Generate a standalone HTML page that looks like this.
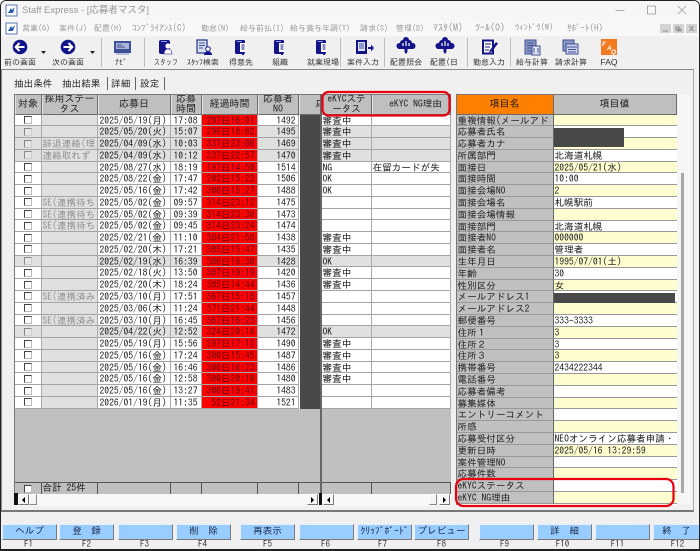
<!DOCTYPE html>
<html lang="ja"><head><meta charset="utf-8"><title>Staff Express</title>
<style>
*{box-sizing:border-box}
html,body{margin:0;padding:0;background:#fff}
body{width:700px;height:551px;overflow:hidden;font:9.6px/11px IPAGothic,"Liberation Mono","Noto Sans CJK JP",monospace;color:#151515}
#w{position:absolute;left:0;top:0;width:700px;height:551px;background:#f0f0f0;border:1px solid #222;border-bottom:2px solid #222;border-radius:6px 6px 0 0;overflow:hidden;filter:blur(.25px)}
#o{position:absolute;left:-1px;top:-1px;width:700px;height:551px}
.a{position:absolute}
i{font-style:normal}
#tb{left:0;top:0;width:700px;height:21px;background:#f6f6f6;color:#999;font:9.5px/22px "Liberation Sans","Noto Sans CJK JP",sans-serif;padding-left:22px}
#mn{left:0;top:21px;width:700px;height:15px;background:#f8f8f8}
#mn span{position:absolute;top:2px;font-size:8px;color:#9a9a9a;white-space:nowrap}
#tl{left:0;top:36px;width:700px;height:33px;background:#f0f0f0}
.lb{position:absolute;top:57px;width:60px;text-align:center;font-size:8px;line-height:10px;color:#333;white-space:nowrap}
.sp{position:absolute;top:38px;width:1px;height:29px;background:#bdbdbd}
#pn{left:1px;top:69px;width:693px;height:443px;border:1px solid #8a8a8a;border-right-color:#aaa;border-bottom:2px solid #777;background:#f0f0f0}
.tab{position:absolute;top:79px;font-size:9.6px;color:#222}
.tl{position:absolute;top:77px;width:1px;height:13px;background:#666}
#g{left:13.5px;top:94px;width:437px;height:411px;background:#c0c0c0;border-top:1px solid #777;border-left:1px solid #777}
.r,.h,.s{display:grid;grid-template-columns:27px 56px 73px 31px 56px 41px 23px 50px 79px}
.h{height:19.5px;background:#bfbfbf}
.h>i{border-right:1px solid #6a6a6a;border-bottom:1px solid #6a6a6a;border-left:1px solid #e4e4e4;text-align:center;font-size:10px;line-height:9.5px;overflow:hidden;white-space:nowrap;display:flex;align-items:center;justify-content:center;color:#222;padding-top:1px}
.r{height:11.78px;background:#fff;line-height:10.5px}
.r>i{border-right:1px solid #aaa;border-bottom:1px solid #a4a4a4;overflow:hidden;white-space:nowrap;display:block;padding-top:2px}
.r>i:first-child{padding-top:0}
.r>i:nth-child(2){background:#e0e0e0;color:#8f8f8f;padding-left:1px}
.r>i:nth-child(3){padding-left:2px}
.r>i:nth-child(4){text-align:center}
.r>i:nth-child(5){background:#f00;color:#5c0000;text-align:right;padding-right:2px}
.r>i:nth-child(6){text-align:right;padding-right:2px}
.r>i:nth-child(7){background:#484848;border-left:1.5px solid #fff;border-right:0;border-bottom:0}
.r>i:nth-child(8){padding-left:1px}
.r>i:nth-child(9){padding-left:1px}
.g{background:#e0e0e0}
u{display:block;width:8px;height:8px;margin:1.5px 0 0 9px;background:#fff;border:1px solid;border-color:#444 #bbb #bbb #444}
.g u{background:#e6e6e6;border-color:#888 #ccc #ccc #888}
.s{position:absolute;left:0;top:387px;height:11.5px;border-top:1px solid #555;line-height:10px;width:436px}
.s>i{border-right:1px solid #555;background:#c0c0c0;padding:1px 0 0 1px;overflow:hidden;white-space:nowrap}
#dv{left:320px;top:94px;width:2px;height:411px;background:#666}
#rg{left:455.5px;top:94px;width:221px;height:411px;background:#fff;border-top:1px solid #777;border-left:1px solid #777}
.hr{display:grid;grid-template-columns:97px 123px;height:19.5px;font-size:10px}
.hr i{display:flex;align-items:center;justify-content:center;background:#bfbfbf;border-right:1px solid #6a6a6a;border-bottom:1px solid #6a6a6a;padding-top:1px}
.hr i:first-child{background:#ff8000}
.p{display:grid;grid-template-columns:97px 123px;height:11.8px;line-height:10.7px;background:#fff}
.p>i{border-bottom:1px solid #999;overflow:hidden;white-space:nowrap;padding:2px 0 0 1px}
.p>i:first-child{background:#c0c0c0;border-right:1px solid #666;color:#222}
.p:nth-child(even)>i:last-child{background:#fdfdd0}
.btn{position:absolute;top:523.5px;height:16px;width:55px;background:#99ccff;border:1px solid;border-color:#e4f0ff #7a7a7a #7a7a7a #e4f0ff;text-align:center;line-height:14px;font-size:9.6px;color:#1c2c50;white-space:pre}
.f{position:absolute;top:539.5px;width:55px;text-align:center;font-size:9px;line-height:10px;color:#333}
.sb{background:#f8f8f8}
.ab{position:absolute;width:11px;height:11px;background:#f4f4f4;border:1px solid;border-color:#fff #777 #777 #fff;color:#000}
.ab:before{content:"";position:absolute;left:3px;top:2.5px;border:3px solid transparent}
.l:before{border-right:3px solid #000;border-left:0}
.rt:before{border-left:3px solid #000;border-right:0}
</style></head><body>
<div id="w"><div id="o">

<div class="a" id="tb">Staff Express - [応募者マスタ]</div>
<div class="a" id="mn">
<span style="left:22px">営業(G)</span><span style="left:59px">案件(J)</span><span style="left:94px">配置(H)</span><span style="left:132px;font-size:9px">ｺﾝﾌﾟﾗｲｱﾝｽ(C)</span><span style="left:201px">勤怠(N)</span><span style="left:240px">給与前払(I)</span><span style="left:290px">給与賞与年調(T)</span><span style="left:360px">請求(S)</span><span style="left:396px">管理(D)</span><span style="left:433px;font-size:10px">ﾏｽﾀ(M)</span><span style="left:475px;font-size:10px">ﾂｰﾙ(O)</span><span style="left:515px;font-size:8.5px">ｳｨﾝﾄﾞｳ(W)</span><span style="left:567px;font-size:9px">ｻﾎﾟｰﾄ(H)</span>
</div>
<div class="a" id="tl"></div>
<div class="sp" style="left:100.5px"></div><div class="sp" style="left:144px"></div><div class="sp" style="left:340px"></div><div class="sp" style="left:384px"></div><div class="sp" style="left:467px"></div><div class="sp" style="left:510px"></div>

<div class="lb" style="left:-10px">前の画面</div>
<div class="lb" style="left:38px">次の画面</div>
<div class="lb" style="left:91px">ﾅﾋﾞ</div>
<div class="lb" style="left:136px"><span style="display:inline-block;transform:scaleX(.75)">スタッフ</span></div>
<div class="lb" style="left:173px">ｽﾀｯﾌ検索</div>
<div class="lb" style="left:211px">得意先</div>
<div class="lb" style="left:250px">組織</div>
<div class="lb" style="left:293px">就業現場</div>
<div class="lb" style="left:333px">案件入力</div>
<div class="lb" style="left:376px">配置照会</div>
<div class="lb" style="left:414px">配置(日</div>
<div class="lb" style="left:459px">勤怠入力</div>
<div class="lb" style="left:502px">給与計算</div>
<div class="lb" style="left:541px">請求計算</div>
<div class="lb" style="left:579px;font-family:'Liberation Sans',sans-serif;font-size:8.5px">FAQ</div>

<div class="a" id="pn"></div>
<div class="tab" style="left:14px">抽出条件</div><div class="tab" style="left:62px">抽出結果</div><div class="tab" style="left:111px">詳細</div><div class="tab" style="left:140px">設定</div>
<div class="tl" style="left:107px"></div><div class="tl" style="left:135px"></div><div class="tl" style="left:164px"></div>

<div class="a" id="g">
<div class="h"><i>対象</i><i>採用ステー<br>タス</i><i>応募日</i><i>応募<br>時間</i><i>経過時間</i><i>応募者<br>NO</i><i style="justify-content:flex-start;padding-left:16px">応</i><i style="font-size:9.6px">eKYCステ<br>ータス</i><i style="padding-left:9px;font-size:9.6px">eKYC NG理由</i></div>
<div class="r"><i><u></u></i><i></i><i>2025/05/19(月)</i><i>17:08</i><i>297日16:01</i><i>1492</i><i></i><i>審査中</i><i></i></div>
<div class="r g"><i><u></u></i><i></i><i>2025/05/20(火)</i><i>15:07</i><i>296日18:02</i><i>1495</i><i></i><i>審査中</i><i></i></div>
<div class="r g"><i><u></u></i><i>辞退連絡(理</i><i>2025/04/09(水)</i><i>10:03</i><i>337日23:06</i><i>1469</i><i></i><i>審査中</i><i></i></div>
<div class="r g"><i><u></u></i><i>連絡取れず</i><i>2025/04/09(水)</i><i>10:12</i><i>337日22:57</i><i>1470</i><i></i><i>審査中</i><i></i></div>
<div class="r"><i><u></u></i><i></i><i>2025/08/27(水)</i><i>18:19</i><i>197日14:50</i><i>1514</i><i></i><i>NG</i><i>在留カードが失</i></div>
<div class="r"><i><u></u></i><i></i><i>2025/08/22(金)</i><i>17:47</i><i>202日15:22</i><i>1506</i><i></i><i>OK</i><i></i></div>
<div class="r"><i><u></u></i><i></i><i>2025/05/16(金)</i><i>17:42</i><i>300日15:27</i><i>1488</i><i></i><i>OK</i><i></i></div>
<div class="r"><i><u></u></i><i>SE(連携待ち</i><i>2025/05/02(金)</i><i>09:57</i><i>314日23:12</i><i>1475</i><i></i><i></i><i></i></div>
<div class="r"><i><u></u></i><i>SE(連携待ち</i><i>2025/05/02(金)</i><i>09:39</i><i>314日23:30</i><i>1473</i><i></i><i></i><i></i></div>
<div class="r"><i><u></u></i><i>SE(連携待ち</i><i>2025/05/02(金)</i><i>09:45</i><i>314日23:24</i><i>1474</i><i></i><i></i><i></i></div>
<div class="r"><i><u></u></i><i></i><i>2025/02/21(金)</i><i>11:10</i><i>384日21:58</i><i>1438</i><i></i><i>審査中</i><i></i></div>
<div class="r"><i><u></u></i><i></i><i>2025/02/20(木)</i><i>17:21</i><i>385日15:47</i><i>1435</i><i></i><i>審査中</i><i></i></div>
<div class="r g"><i><u></u></i><i></i><i>2025/02/19(水)</i><i>16:39</i><i>386日16:30</i><i>1428</i><i></i><i>OK</i><i></i></div>
<div class="r"><i><u></u></i><i></i><i>2025/02/18(火)</i><i>13:50</i><i>387日19:19</i><i>1420</i><i></i><i>審査中</i><i></i></div>
<div class="r"><i><u></u></i><i></i><i>2025/02/20(木)</i><i>18:24</i><i>385日14:44</i><i>1436</i><i></i><i>審査中</i><i></i></div>
<div class="r"><i><u></u></i><i>SE(連携済み</i><i>2025/03/10(月)</i><i>17:51</i><i>367日15:18</i><i>1457</i><i></i><i></i><i></i></div>
<div class="r"><i><u></u></i><i></i><i>2025/03/06(木)</i><i>11:24</i><i>371日21:44</i><i>1448</i><i></i><i></i><i></i></div>
<div class="r"><i><u></u></i><i>SE(連携済み</i><i>2025/03/10(月)</i><i>16:45</i><i>367日16:23</i><i>1456</i><i></i><i></i><i></i></div>
<div class="r g"><i><u></u></i><i></i><i>2025/04/22(火)</i><i>12:52</i><i>324日20:16</i><i>1472</i><i></i><i>OK</i><i></i></div>
<div class="r"><i><u></u></i><i></i><i>2025/05/19(月)</i><i>15:56</i><i>297日17:12</i><i>1490</i><i></i><i>審査中</i><i></i></div>
<div class="r"><i><u></u></i><i></i><i>2025/05/16(金)</i><i>17:24</i><i>300日15:45</i><i>1487</i><i></i><i>審査中</i><i></i></div>
<div class="r"><i><u></u></i><i></i><i>2025/05/16(金)</i><i>16:46</i><i>300日16:23</i><i>1486</i><i></i><i>審査中</i><i></i></div>
<div class="r"><i><u></u></i><i></i><i>2025/05/16(金)</i><i>12:58</i><i>300日20:10</i><i>1480</i><i></i><i>審査中</i><i></i></div>
<div class="r"><i><u></u></i><i></i><i>2025/05/16(金)</i><i>13:27</i><i>300日19:41</i><i>1483</i><i></i><i></i><i></i></div>
<div class="r"><i><u></u></i><i></i><i>2026/01/19(月)</i><i>11:35</i><i>52日21:34</i><i>1521</i><i></i><i></i><i></i></div>
<div class="s"><i style="padding:0"><u></u></i><i>合計 25件</i><i></i><i></i><i></i><i></i><i></i><i></i><i></i></div>
<div class="a sb" style="left:0;top:398.5px;width:436px;height:12px"></div>
</div>
<div class="a" id="dv"></div>
<div class="a" style="left:14px;top:493px;width:4px;height:12px;background:#111"></div>
<div class="ab l" style="left:18px;top:493.5px"></div>
<div class="a" style="left:29px;top:493.5px;width:8px;height:11px;background:#f4f4f4;border:1px solid;border-color:#fff #888 #888 #fff"></div>
<div class="ab rt" style="left:307px;top:493.5px"></div>
<div class="a" style="left:319px;top:493px;width:3px;height:12px;background:#111"></div>
<div class="ab l" style="left:323px;top:493.5px"></div>
<div class="a" style="left:429px;top:493.5px;width:8px;height:11px;background:#f4f4f4;border:1px solid;border-color:#fff #888 #888 #fff"></div>
<div class="ab rt" style="left:439px;top:493.5px"></div>

<div class="a" id="rg">
<div class="hr"><i>項目名</i><i>項目値</i></div>
<div class="p"><i>重複情報(メールアド</i><i></i></div>
<div class="p"><i>応募者氏名</i><i></i></div>
<div class="p"><i>応募者カナ</i><i></i></div>
<div class="p"><i>所属部門</i><i>北海道札幌</i></div>
<div class="p"><i>面接日</i><i>2025/05/21(水)</i></div>
<div class="p"><i>面接時間</i><i>10:00</i></div>
<div class="p"><i>面接会場NO</i><i>2</i></div>
<div class="p"><i>面接会場名</i><i>札幌駅前</i></div>
<div class="p"><i>面接会場情報</i><i></i></div>
<div class="p"><i>面接部門</i><i>北海道札幌</i></div>
<div class="p"><i>面接者NO</i><i>000000</i></div>
<div class="p"><i>面接者名</i><i>管理者</i></div>
<div class="p"><i>生年月日</i><i>1995/07/01(土)</i></div>
<div class="p"><i>年齢</i><i>30</i></div>
<div class="p"><i>性別区分</i><i>女</i></div>
<div class="p"><i>メールアドレス1</i><i></i></div>
<div class="p"><i>メールアドレス2</i><i></i></div>
<div class="p"><i>郵便番号</i><i>333-3333</i></div>
<div class="p"><i>住所１</i><i>3</i></div>
<div class="p"><i>住所２</i><i>3</i></div>
<div class="p"><i>住所３</i><i>3</i></div>
<div class="p"><i>携帯番号</i><i>2434222344</i></div>
<div class="p"><i>電話番号</i><i></i></div>
<div class="p"><i>応募者備考</i><i></i></div>
<div class="p"><i>募集媒体</i><i></i></div>
<div class="p"><i>エントリーコメント</i><i></i></div>
<div class="p"><i>所感</i><i></i></div>
<div class="p"><i>応募受付区分</i><i>NEOオンライン応募者申請・</i></div>
<div class="p"><i>更新日時</i><i>2025/05/16 13:29:59</i></div>
<div class="p"><i>案件管理NO</i><i></i></div>
<div class="p"><i>応募件数</i><i></i></div>
<div class="p"><i>eKYCステータス</i><i></i></div>
<div class="p"><i>eKYC NG理由</i><i></i></div>
</div>
<div class="a" style="left:554px;top:128px;width:70px;height:19px;background:#484848"></div>
<div class="a" style="left:554px;top:293px;width:121px;height:10px;background:#484848"></div>
<div class="a" style="left:677px;top:95px;width:13px;height:410px;background:#f6f6f6"></div>
<div class="a" style="left:681px;top:173px;width:2.5px;height:320px;background:#a8a8a8"></div>

<div class="btn" style="left:2px">ヘルプ</div><div class="btn" style="left:59px">登　録</div><div class="btn" style="left:118px"></div><div class="btn" style="left:176px">削　除</div><div class="btn" style="left:240px">再表示</div><div class="btn" style="left:298.5px"></div><div class="btn" style="left:357px">ｸﾘｯﾌﾟﾎﾞｰﾄﾞ</div><div class="btn" style="left:414px">プレビュー</div><div class="btn" style="left:479px"></div><div class="btn" style="left:537px">詳　細</div><div class="btn" style="left:595px"></div><div class="btn" style="left:653px;width:47px">終　了</div>
<div class="f" style="left:1px">F1</div><div class="f" style="left:59px">F2</div><div class="f" style="left:117px">F3</div><div class="f" style="left:175px">F4</div><div class="f" style="left:240px">F5</div><div class="f" style="left:298px">F6</div><div class="f" style="left:355px">F7</div><div class="f" style="left:414px">F8</div><div class="f" style="left:477px">F9</div><div class="f" style="left:535px">F10</div><div class="f" style="left:590px">F11</div><div class="f" style="left:650px">F12</div>

<svg class="a" style="left:0;top:0" width="700" height="551" viewBox="0 0 700 551" fill="none">
<defs>
<g id="app"><rect x="0" y="0" width="11" height="11" fill="#fff" stroke="#5a7ab0"/><path d="M2 8l3-5 1 2 3-3-2 6z" fill="#2a5ab0"/></g>
<g id="tree"><path d="M-3-6a3 3 0 0 1 6 0a3 3 0 0 1 3 3a3 3 0 0 1 1 6H-7a3 3 0 0 1 1-6a3 3 0 0 1 3-3z" fill="#14148a"/><path d="M-3-3v3M0-5v5M3-3v3" stroke="#fff" stroke-width="1.2"/><path d="M-1.5 3h3v3l-1.5 2-1.5-2z" fill="#14148a"/></g>
<g id="bld"><rect x="0" y="0" width="10" height="14" rx="1.5" fill="#14148a"/><rect x="5" y="3" width="6" height="9" fill="#fff"/><path d="M6.5 5h3M6.5 7h3M6.5 9h3" stroke="#14148a"/><path d="M2 1.5h5" stroke="#9a9ae0"/><path d="M7 12v3h2v-3" fill="#14148a"/></g>
<g id="per"><rect x="0" y="0" width="11" height="14" rx="2" fill="#14148a"/><path d="M2 1.5h6" stroke="#9a9ae0"/><circle cx="9" cy="6" r="2.6" fill="#fff"/><path d="M5 14q0-5 4-5t4 5z" fill="#fff" stroke="#14148a" stroke-width=".6"/></g>
</defs>
<use href="#app" x="6" y="5"/><use href="#app" x="6" y="23"/>
<path d="M615.5 10.5h9M647.5 6h8v8h-8zM678 6l8 8M686 6l-8 8" stroke="#999" stroke-width=".8"/>
<rect x="660" y="24" width="11" height="9" fill="#d4d4d4"/><rect x="673" y="24" width="11" height="9" fill="#d4d4d4"/><rect x="686" y="24" width="11" height="9" fill="#d4d4d4"/>
<path d="M663 31h5M676 27h3v3h-3zM678 29h3v2h-3zM689.5 26l4 5M693.5 26l-4 5" stroke="#7a7a7a" stroke-width=".8"/>

<circle cx="20" cy="47" r="7.3" fill="#14148a"/><path d="M24.5 47H16M19.5 43l-3.8 4 3.8 4" stroke="#fff" stroke-width="2"/>
<circle cx="68" cy="47" r="7.3" fill="#14148a"/><path d="M63.500 47H72M68.500 43l3.800 4-3.800 4" stroke="#fff" stroke-width="2"/>
<path d="M41 51h5l-2.500 3zM90 51h5l-2.500 3z" fill="#222"/>
<rect x="114" y="41" width="17" height="12" fill="#3f4f95"/><rect x="116" y="43" width="13" height="6" fill="#a8b4d8"/><path d="M117 45h5M117 47h8M120 51h5" stroke="#3f4f95"/><path d="M116 54h13" stroke="#8090c0"/>
<use href="#per" x="159" y="40"/>
<rect x="197" y="40" width="10" height="13" fill="#d8e0f0" stroke="#3a4a95" stroke-width="1.400"/><path d="M199 43h6M199 45.500h6M199 48h4" stroke="#3a4a95"/><circle cx="208" cy="49" r="2.300" fill="#fff" stroke="#14148a"/><path d="M204 55q0-3.500 4-3.500t4 3.500z" fill="#14148a"/>
<use href="#bld" x="235" y="40"/><use href="#bld" x="274" y="40"/><use href="#bld" x="316" y="40"/>
<rect x="356" y="40" width="11" height="14" fill="#14148a"/><rect x="358" y="42" width="7" height="9" fill="#dfe4f4"/><path d="M359 44h5M359 46h5M359 48h5" stroke="#14148a" stroke-width=".8"/><path d="M368 47h3v-2.500l3 3.500-3 3.500V49h-3z" fill="#14148a"/>
<use href="#tree" x="406" y="46"/><use href="#tree" x="445" y="46"/>
<path d="M483 40.500h10v13h-10z" fill="#fff" stroke="#14148a" stroke-width="2"/><path d="M485 44h6M485 47h5M485 50h4" stroke="#14148a"/><path d="M490 50l6-8 2 1.500-6 8-3 1z" fill="#14148a"/>
<rect x="525" y="40" width="11" height="14" fill="#8a98c4" stroke="#3f4f95"/><path d="M527 43h7M527 45.500h7M527 48h7M527 51h7" stroke="#3f4f95"/><rect x="532" y="46" width="8" height="9" fill="#e4e8f4" stroke="#3f4f95"/><path d="M534 48v5M538 48v5" stroke="#3f4f95"/>
<rect x="563" y="40" width="11" height="11" fill="#8a98c4" stroke="#3f4f95"/><rect x="566" y="44" width="12" height="10" fill="#cfd6ec" stroke="#3f4f95"/><path d="M567 47h10M568 49.500h8M568 52h8" stroke="#3f4f95"/>
<rect x="601" y="39" width="16" height="16" fill="#f47a20"/>
<text x="602" y="46" font-family="Liberation Sans,sans-serif" font-size="6.500" font-weight="bold" font-style="italic" fill="#fff">F</text><text x="607" y="50" font-family="Liberation Sans,sans-serif" font-size="6.500" font-weight="bold" font-style="italic" fill="#fff">A</text><text x="611" y="54" font-family="Liberation Sans,sans-serif" font-size="6.500" font-weight="bold" font-style="italic" fill="#fff">Q</text>

<rect x="322.500" y="92" width="127" height="23.500" rx="6" stroke="#e8000f" stroke-width="2.200"/>
<rect x="456" y="479" width="217.500" height="27" rx="7.500" stroke="#e8000f" stroke-width="2.200"/>
</svg>
</div></div>
</body></html>
